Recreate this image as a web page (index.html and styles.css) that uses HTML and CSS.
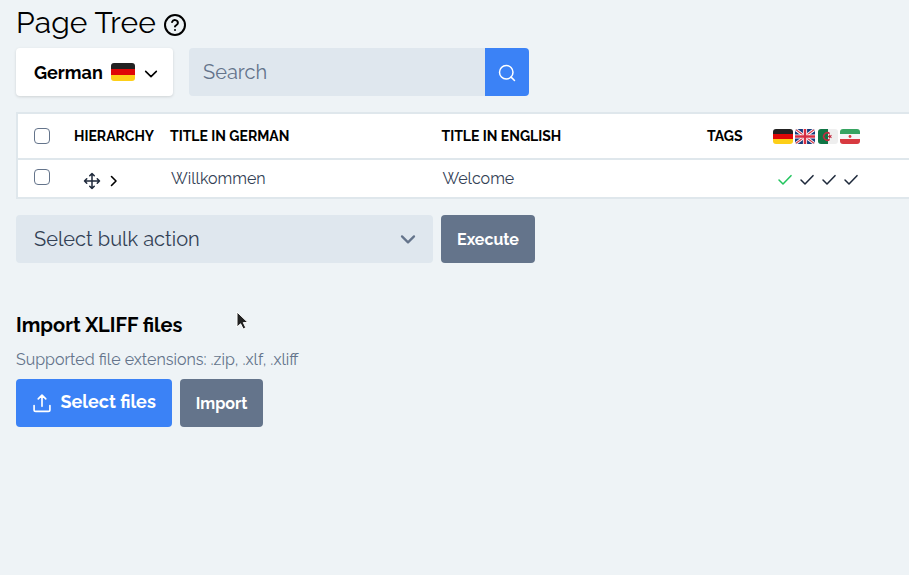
FILE: index.html
```
<!DOCTYPE html>
<html lang="en">
<head>
<meta charset="utf-8">
<title>Page Tree</title>
<link rel="stylesheet" href="styles.css">
</head>
<body>
<svg class="defs" width="0" height="0">
  <defs>
    <symbol id="flag-de" viewBox="0 0 24 18" preserveAspectRatio="none"><path fill="#222" d="M0 0h24v6H0z"/><path fill="#df0707" d="M0 6h24v6H0z"/><path fill="#fdcf18" d="M0 12h24v6H0z"/></symbol>
    <symbol id="flag-gb" viewBox="0 0 24 18" preserveAspectRatio="none"><path fill="#163b7d" d="M0 0h24v18H0z"/><path stroke="#fff" stroke-width="3.600" d="M0 0l24 18M24 0L0 18"/><path stroke="#d63c4b" stroke-width="1.500" d="M0 0l24 18M24 0L0 18"/><path stroke="#fff" stroke-width="5" d="M12 0v18M0 9h24"/><path stroke="#d62f42" stroke-width="3" d="M12 0v18M0 9h24"/></symbol>
    <symbol id="flag-dz" viewBox="0 0 24 18" preserveAspectRatio="none"><path fill="#107545" d="M0 0h12v18H0z"/><path fill="#eee" d="M12 0h12v18H12z"/><path fill="none" stroke="#c42940" stroke-width="1.800" d="M14 5.600a4.400 4.400 0 1 0 0 6.800"/><path fill="#c42940" d="M11 9l2-.8.2-2.200 1.400 1.700 2.200-.7-1.200 2 1.200 2-2.200-.7-1.400 1.700-.2-2.200z"/></symbol>
    <symbol id="flag-ir" viewBox="0 0 24 18" preserveAspectRatio="none"><path fill="#37a461" d="M0 0h24v6H0z"/><path fill="#f6f6f6" d="M0 6h24v6H0z"/><path fill="#d83a40" d="M0 12h24v6H0z"/><circle fill="#d83a40" cx="12" cy="9" r="1.700"/></symbol>
    <symbol id="check" viewBox="0 0 24 24"><path d="M21 5.500L9 18l-6-6"/></symbol>
  </defs>
</svg>
<main class="page">
  <header class="heading">
    <h1>Page Tree</h1>
    <svg class="icon help" viewBox="0 0 24 24"><circle cx="12" cy="12" r="10"/><path d="M9.100 9a3 3 0 0 1 5.800 1c0 2-2.900 2.300-2.900 3.600M12 17h.01"/></svg>
  </header>
  <div class="toolbar">
    <button class="language"><span>German</span><svg class="flag large"><use href="#flag-de"/></svg><svg class="icon chevron" viewBox="0 0 24 24"><path d="M4 8l8 8 8-8"/></svg></button>
    <div class="search"><div class="field">Search</div><button><svg class="icon" viewBox="0 0 24 24"><circle cx="11" cy="11" r="9"/><path d="M22 22l-4.500-4.500"/></svg></button></div>
  </div>
  <section class="tree">
    <div class="row head">
      <i class="box"></i><b>HIERARCHY</b><b>TITLE IN GERMAN</b><b>TITLE IN ENGLISH</b><b>TAGS</b>
      <div class="flags"><svg class="flag"><use href="#flag-de"/></svg><svg class="flag"><use href="#flag-gb"/></svg><svg class="flag"><use href="#flag-dz"/></svg><svg class="flag"><use href="#flag-ir"/></svg></div>
    </div>
    <div class="row item">
      <i class="box"></i>
      <div class="handles"><svg class="icon move" viewBox="0 0 24 24"><path d="M12 2v20M2 12h20M9 5l3-3 3 3M9 19l3 3 3-3M5 9l-3 3 3 3M19 9l3 3-3 3"/></svg><svg class="icon expand" viewBox="0 0 10 14"><path d="M2.500 2.500L7 7l-4.500 4.500"/></svg></div>
      <span class="title">Willkommen</span><span class="title">Welcome</span><span></span>
      <div class="checks"><svg class="icon ok"><use href="#check"/></svg><svg class="icon"><use href="#check"/></svg><svg class="icon"><use href="#check"/></svg><svg class="icon"><use href="#check"/></svg></div>
    </div>
  </section>
  <div class="bulk">
    <div class="select"><span>Select bulk action</span><svg class="icon" viewBox="0 0 24 24"><path d="M3 8l9 9 9-9"/></svg></div>
    <button class="gray execute">Execute</button>
  </div>
  <section class="import">
    <h2>Import XLIFF files</h2>
    <p>Supported file extensions: .zip, .xlf, .xliff</p>
    <div class="actions">
      <button class="blue"><svg class="icon" viewBox="0 0 24 24"><path d="M2.500 15v5a2 2 0 0 0 2 2h15a2 2 0 0 0 2-2V15M12 16V3M7.500 7L12 2.500 16.500 7"/></svg><span>Select files</span></button>
      <button class="gray send">Import</button>
    </div>
  </section>
</main>
<svg class="cursor" viewBox="0 0 14 20"><path d="M1 1v15l3.600-3.200 2.600 5.200 2.600-1.300-2.500-5.100H12z"/></svg>
</body>
</html>
```
FILE: styles.css
```
* { box-sizing: border-box; }
body { margin: 0; width: 909px; height: 575px; overflow: hidden; background: #eef3f6; color: #000; font-family: Raleway, Lato, sans-serif; font-size: 16px; line-height: 24px; }
button { border: 0; padding: 0; font: inherit; color: inherit; display: flex; align-items: center; }
h1, h2, p { margin: 0; }
span, b { white-space: nowrap; }
.defs { position: absolute; }
.page { padding: 4px 0 0 16px; }
.icon { display: block; flex: none; fill: none; stroke: currentColor; stroke-width: 2; stroke-linecap: round; stroke-linejoin: round; }
.flag { display: block; flex: none; width: 20px; height: 15px; border-radius: 3px; }
.heading { display: flex; height: 44px; }
h1 { font-size: 30px; line-height: 38px; font-weight: 400; letter-spacing: .15px; width: 147px; }
.help { width: 24px; height: 24px; margin-top: 9px; }
.toolbar { display: flex; gap: 16px; height: 48px; }
.language { width: 157px; padding-left: 18px; background: #fff; border-radius: 4px; box-shadow: 0 1px 3px #0002; font-size: 18px; font-weight: 700; }
.language span { width: 77px; padding-top: 2px; text-align: left; }
.flag.large { width: 24px; height: 18px; }
.chevron { width: 16px; height: 16px; margin-left: 8px; margin-top: 3px; stroke-width: 2.4; }
.search { display: flex; width: 340px; border-radius: 4px; overflow: hidden; }
.field { flex: 1; padding-left: 14px; background: #dfe7ee; color: #64748b; font-size: 20px; line-height: 49px; }
.search button { width: 44px; justify-content: center; background: #3b82f6; color: #fff; }
.search .icon { width: 18px; height: 18px; margin-top: 2px; }
.tree { margin-top: 16px; background: #fff; border: 2px solid #dfe7ec; border-right: 0; }
.row { display: grid; grid-template-columns: 56px 96px 271.5px 265.5px 66px 1fr; }
.head { height: 44px; font-size: 14px; line-height: 45px; }
.item { height: 39px; border-top: 2px solid #dfe7ec; color: #334155; line-height: 37px; }
.title { padding-left: 1px; }
.box { width: 16px; height: 16px; margin: 14px 0 0 16px; border: 1px solid #64748b; border-radius: 4px; }
.item .box { margin-top: 9px; }
.flags { display: flex; gap: 2.4px; padding-top: 15px; }
.handles { display: flex; color: #1e293b; }
.move { width: 18px; height: 18px; margin: 12px 8px 0 9px; }
.expand { width: 10px; height: 14px; margin-top: 14px; color: #000; stroke-width: 1.6; }
.checks { display: flex; gap: 6px; padding: 12px 0 0 4px; color: #1e293b; }
.checks .icon { width: 16px; height: 16px; stroke-width: 2.3; }
.checks .ok { color: #22c55e; }
.bulk { display: flex; gap: 8px; height: 48px; margin-top: 16px; }
.select { width: 417px; display: flex; justify-content: space-between; align-items: center; padding: 0 17px 0 18px; border-radius: 4px; background: #dfe7ee; color: #334155; font-size: 20px; }
.select .icon { width: 16px; height: 16px; color: #64748b; stroke-width: 3.4; }
.gray { justify-content: center; background: #64748b; color: #fff; font-weight: 700; border-radius: 4px; }
.execute { width: 94px; padding-top: 1px; }
.import { margin-top: 48px; }
h2 { font-size: 20px; line-height: 28px; font-weight: 700; letter-spacing: 0; }
p { margin-top: 8px; padding-top: 1px; color: #64748b; line-height: 24px; }
.actions { display: flex; gap: 8px; height: 48px; margin-top: 7px; }
.blue { width: 156px; padding-left: 16px; gap: 8.5px; border-radius: 4px; background: #3b82f6; color: #fff; font-size: 18px; font-weight: 700; }
.blue .icon { width: 20px; height: 20px; }
.blue span { padding-bottom: 3px; }
.send { width: 83px; padding-top: 1px; }
.cursor { position: absolute; left: 236px; top: 311px; width: 14px; height: 20px; fill: #222; stroke: #fff; stroke-width: 1; }
```
